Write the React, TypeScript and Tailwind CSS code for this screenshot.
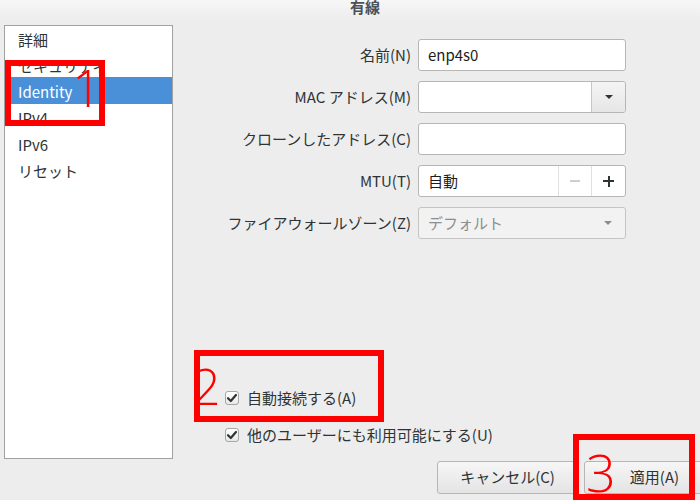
import React from "react";

const items: [string, string][] = [
  ["詳細", "h-[26px]"],
  ["セキュリティ", "h-[25px]"],
  ["Identity", "h-[27px]"],
  ["IPv4", "h-[26px]"],
  ["IPv6", "h-[27px]"],
  ["リセット", "h-[26px]"],
];

function Check() {
  return (
    <div className="w-[14px] h-[14px] rounded-[3px] border border-[#a6a6a6] bg-gradient-to-b from-white to-[#e8e8e8] flex items-center justify-center shrink-0">
      <svg width="12" height="12" viewBox="0 0 12 12">
        <path d="M2 6.2 L4.8 9 L10 3" fill="none" stroke="#2e3436" strokeWidth="2.2" strokeLinecap="round" strokeLinejoin="round" />
      </svg>
    </div>
  );
}

function Arrow({ color }: { color: string }) {
  return (
    <svg width="10" height="6" viewBox="0 0 10 6">
      <path d="M1 1 L9 1 L5 5 Z" fill={color} />
    </svg>
  );
}

function Row({ label, children }: { label: string; children: React.ReactNode }) {
  return (
    <div className="flex items-center justify-end gap-[7px] pr-[74px]">
      <div className="text-[#2e3436] whitespace-nowrap">{label}</div>
      {children}
    </div>
  );
}

export default function App() {
  return (
    <div className="relative w-[700px] h-[500px] overflow-hidden bg-[#ededed] text-[#2e3436] font-['Noto_Sans_CJK_JP','Noto_Sans',sans-serif] text-[15px]">
      <div className="h-[22px] bg-gradient-to-b from-[#f8f8f8] to-[#ededed] pl-[350px]">
        <div className="-mt-[2px] text-[15px] leading-[18px] font-bold text-[#4b5156]">有線</div>
      </div>
      <div className="flex">
        <div className="ml-[4px] mt-[5px] w-[169px] h-[434px] border border-[#a1a1a1] bg-white shrink-0">
          {items.map(([it, h]) => (
            <div
              key={it}
              className={
                h + " flex items-center pl-[13px] pt-[3px] " +
                (it === "Identity" ? "bg-[#4a90d9] text-white" : "text-[#2e3436]")
              }
            >
              {it}
            </div>
          ))}
        </div>
        <div className="w-[527px] shrink-0 flex flex-col pt-[19px]">
          <div className="flex flex-col gap-[10px]">
            <Row label="名前(N)">
              <div className="w-[208px] h-[32px] rounded-[3px] border border-[#b6b6b3] bg-white flex items-center pl-[9px] text-[#1c1c1c]">
                enp4s0
              </div>
            </Row>
            <Row label="MAC アドレス(M)">
              <div className="w-[208px] h-[32px] rounded-[3px] border border-[#b6b6b3] bg-white flex">
                <div className="flex-1" />
                <div className="w-[34px] border-l border-[#c6c6c3] bg-gradient-to-b from-[#f4f4f4] to-[#e6e6e6] flex items-center justify-center rounded-r-[3px]">
                  <Arrow color="#2e3436" />
                </div>
              </div>
            </Row>
            <Row label="クローンしたアドレス(C)">
              <div className="w-[208px] h-[32px] rounded-[3px] border border-[#b6b6b3] bg-white" />
            </Row>
            <Row label="MTU(T)">
              <div className="w-[208px] h-[32px] rounded-[3px] border border-[#b6b6b3] bg-white flex">
                <div className="flex-1 flex items-center pl-[9px] text-[#1c1c1c]">自動</div>
                <div className="w-[33px] border-l border-[#e0e0e0] flex items-center justify-center">
                  <div className="w-[10px] h-[2px] bg-[#cfcfcf]" />
                </div>
                <div className="w-[34px] border-l border-[#e0e0e0] flex items-center justify-center relative">
                  <div className="w-[11px] h-[2px] bg-[#2e3436]" />
                  <div className="absolute w-[2px] h-[11px] bg-[#2e3436]" />
                </div>
              </div>
            </Row>
            <Row label="ファイアウォールゾーン(Z)">
              <div className="w-[208px] h-[32px] rounded-[3px] border border-[#c4c4c2] bg-[#f2f2f2] flex items-center pl-[9px] pr-[12px] text-[#8b8e8f]">
                <div className="flex-1">デフォルト</div>
                <Arrow color="#8b8e8f" />
              </div>
            </Row>
          </div>
          <div className="mt-[149px] pl-[52px] flex flex-col gap-[17px]">
            <div className="h-[20px] flex items-center gap-[8px]">
              <Check />
              <span>自動接続する(A)</span>
            </div>
            <div className="h-[20px] flex items-center gap-[8px]">
              <Check />
              <span>他のユーザーにも利用可能にする(U)</span>
            </div>
          </div>
          <div className="mt-[16px] pl-[264px] flex gap-[6px]">
            <div className="w-[141px] h-[33px] shrink-0 rounded-[3px] border border-[#b6b6b3] bg-gradient-to-b from-[#f6f6f6] to-[#e4e4e4] flex items-center justify-center">
              キャンセル(C)
            </div>
            <div className="w-[141px] h-[33px] shrink-0 rounded-[3px] border border-[#b6b6b3] bg-gradient-to-b from-[#f6f6f6] to-[#e4e4e4] flex items-center justify-center">
              適用(A)
            </div>
          </div>
        </div>
      </div>

      <div className="absolute left-[5px] top-[60px] w-[100px] h-[66px] border-[6px] border-[#ff0000]" />
      <div className="absolute left-[194px] top-[350px] w-[190px] h-[72px] border-[6px] border-[#ff0000]" />
      <div className="absolute left-[573px] top-[434px] w-[122px] h-[66px] border-[6px] border-[#ff0000]" />

      <span className="absolute left-[72px] top-[61px] text-[52px] leading-none text-[#ff0000] font-['Open_Sans',sans-serif] font-light">1</span>
      <span className="absolute left-[192px] top-[361px] text-[50px] leading-none text-[#ff0000] font-['Open_Sans',sans-serif] font-light">2</span>
      <span className="absolute left-[586px] top-[446px] text-[52px] leading-none text-[#ff0000] font-['Open_Sans',sans-serif] font-light">3</span>
    </div>
  );
}
